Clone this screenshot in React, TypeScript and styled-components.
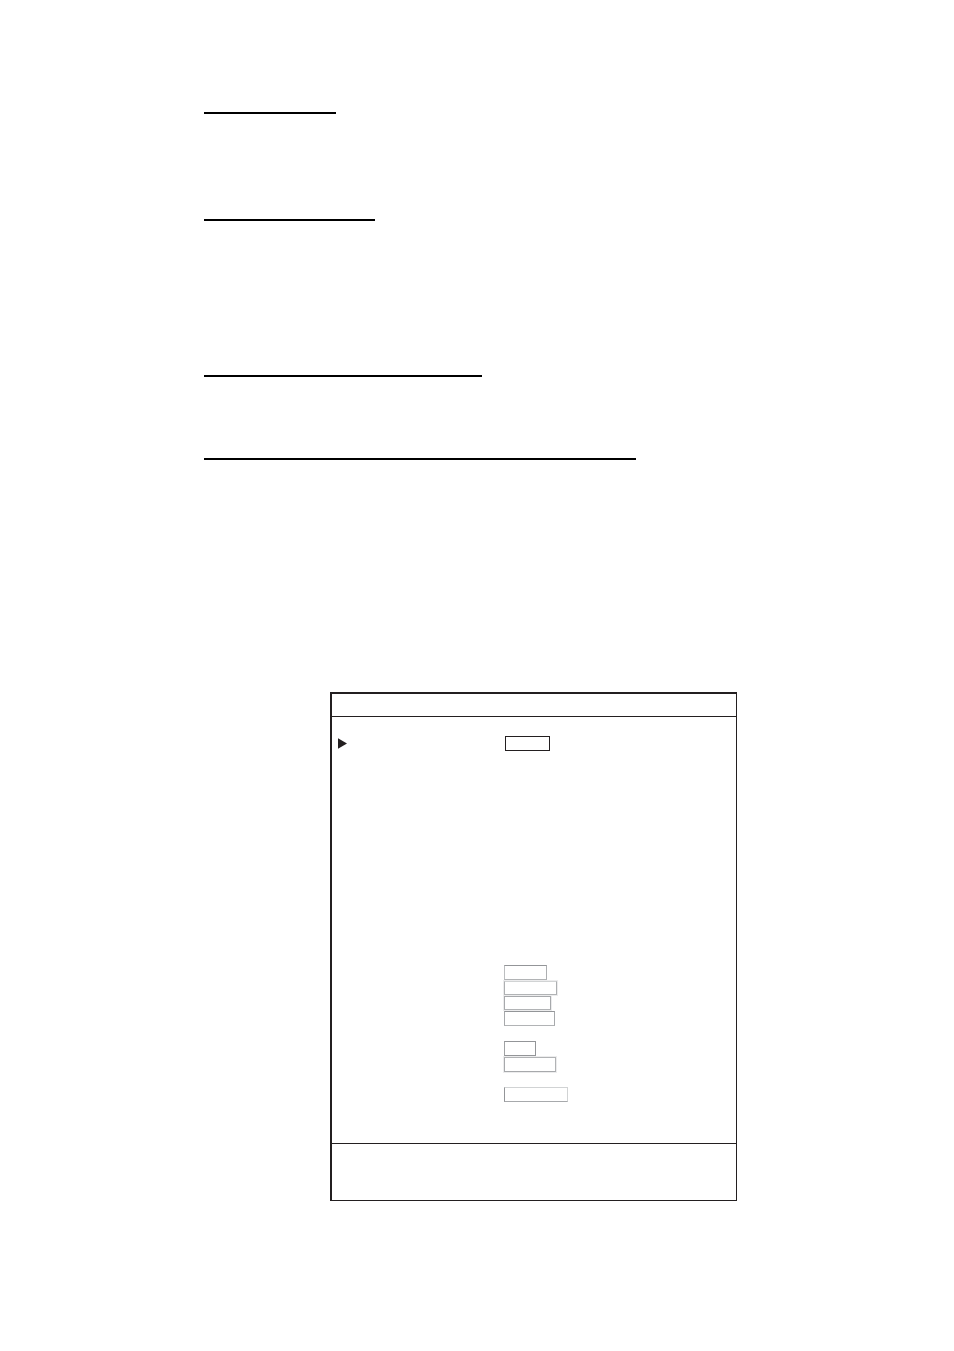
import React from "react";
import styled, { createGlobalStyle } from "styled-components";

const INK = "#231f20";

const GlobalStyle = createGlobalStyle`
  *, *::before, *::after { box-sizing: border-box; }
  body { margin: 0; background: #ffffff; font-family: "Liberation Sans", sans-serif; }
`;

const Page = styled.main`
  padding: 112px 217px 140px 204px;
`;

const Rule = styled.hr<{ $width: number; $before?: number }>`
  width: ${(p) => p.$width}px;
  max-width: 100%;
  height: 2px;
  margin: ${(p) => p.$before ?? 0}px 0 0;
  border: 0;
  background: #000000;
`;

const Panel = styled.section`
  margin: 232px 0 0 126px;
  border: 1px solid ${INK};
  border-top-width: 2px;
  border-left-width: 2px;
`;

const PanelHeader = styled.header`
  height: 23px;
  border-bottom: 1px solid ${INK};
`;

const PanelBody = styled.div`
  padding: 19px 0 41px;
`;

const PanelFooter = styled.footer`
  height: 57px;
  border-top: 1px solid ${INK};
`;

const SelectedRow = styled.div`
  display: grid;
  grid-template-columns: 167px 1fr;
  align-items: center;
  height: 15px;
  padding-left: 6px;
`;

const SelectedValue = styled.div`
  width: 45px;
  height: 15px;
  border: 1px solid ${INK};
`;

const Groups = styled.div`
  display: flex;
  flex-direction: column;
  gap: 15px;
  margin: 214px 0 0 172px;
`;

const Group = styled.div`
  display: flex;
  flex-direction: column;
  gap: 1px;
`;

const Value = styled.div<{ $width: number; $height: number; $colors: string; $halo?: boolean }>`
  width: ${(p) => p.$width}px;
  height: ${(p) => p.$height}px;
  border: 1px solid;
  border-color: ${(p) => p.$colors};
  box-shadow: ${(p) => (p.$halo ? "0 0 0 1px #ececed" : "none")};
`;

type Field = { width: number; height: number; colors: string; halo?: boolean };

const groups: Field[][] = [
  [
    { width: 43, height: 15, colors: "#939598 #adafb1 #b1b3b5 #bcbec0" },
    { width: 53, height: 14, colors: "#d1d3d4 #adafb1 #b1b3b5 #adafb1", halo: true },
    { width: 47, height: 14, colors: "#a7a9ac #a7a9ac #b1b3b5 #a7a9ac", halo: true },
    { width: 51, height: 15, colors: "#939598 #a7a9ac #b1b3b5 #a7a9ac" },
  ],
  [
    { width: 32, height: 15, colors: "#939598 #939598 #939598 #a0a2a4" },
    { width: 52, height: 15, colors: "#b1b3b5 #b1b3b5 #a7a9ac #a7a9ac", halo: true },
  ],
  [{ width: 64, height: 15, colors: "#d1d3d4 #d1d3d4 #a7a9ac #939598" }],
];

function Pointer() {
  return (
    <svg width="9" height="11" viewBox="0 0 9 11" aria-hidden="true">
      <path d="M0 0.2 L9 5.5 L0 10.8 Z" fill={INK} />
    </svg>
  );
}

export default function App() {
  return (
    <>
      <GlobalStyle />
      <Page>
        <Rule $width={132} />
        <Rule $width={171} $before={105} />
        <Rule $width={278} $before={154} />
        <Rule $width={432} $before={81} />
        <Panel>
          <PanelHeader />
          <PanelBody>
            <SelectedRow>
              <Pointer />
              <SelectedValue />
            </SelectedRow>
            <Groups>
              {groups.map((fields, g) => (
                <Group key={g}>
                  {fields.map((f, i) => (
                    <Value
                      key={i}
                      $width={f.width}
                      $height={f.height}
                      $colors={f.colors}
                      $halo={f.halo}
                    />
                  ))}
                </Group>
              ))}
            </Groups>
          </PanelBody>
          <PanelFooter />
        </Panel>
      </Page>
    </>
  );
}
